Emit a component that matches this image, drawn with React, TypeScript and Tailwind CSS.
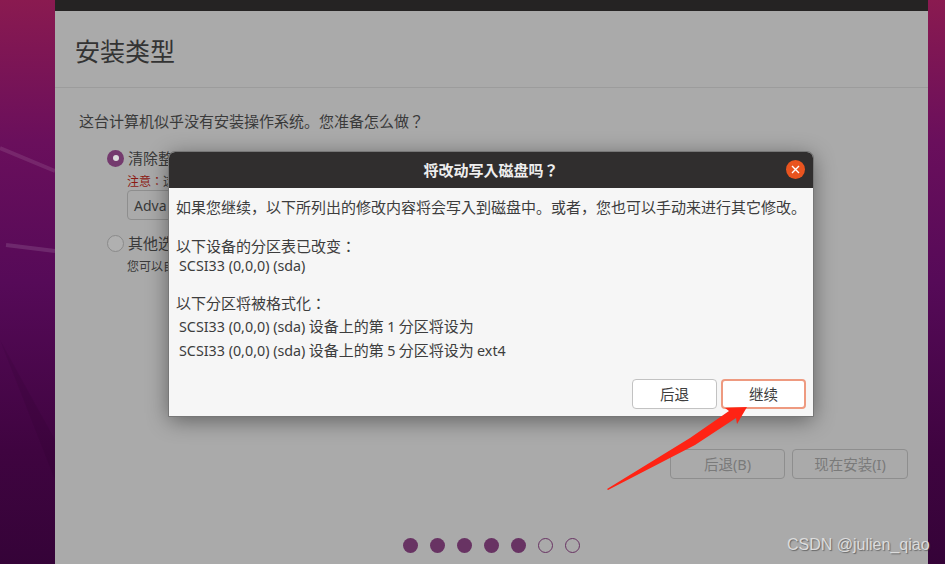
const font = "font-['Noto_Sans_CJK_JP','Noto_Sans',sans-serif]";
const latin = "font-['Noto_Sans',sans-serif] text-[14.3px]";

function Wallpaper() {
  return (
    <svg className="absolute inset-0 h-full w-full" viewBox="0 0 945 564" preserveAspectRatio="none">
      <path d="M0 148 L55 171" stroke="#ffffff" strokeOpacity="0.1" strokeWidth="4" />
      <path d="M6 245 L55 251" stroke="#ffffff" strokeOpacity="0.12" strokeWidth="4" />
      <path d="M0 340 L55 440 L55 480 Z" fill="#000000" fillOpacity="0.06" />
    </svg>
  );
}

function Arrow() {
  return (
    <svg className="pointer-events-none absolute left-0 top-0 h-[564px] w-[945px]" viewBox="0 0 945 564">
      <polygon points="607,489 690,438 729,411 725,408 747,407 737,424 736,418 695,445 608,490" fill="#ff2314" />
    </svg>
  );
}

function Dialog() {
  return (
    <div className="absolute left-[114px] top-[152px] h-[264px] w-[644px] overflow-hidden rounded-t-[6px] bg-[#f6f6f6] shadow-[0_4px_22px_rgba(0,0,0,0.45)] outline outline-1 outline-[#777777]">
      <div className="flex h-[36px] items-center justify-center bg-[#302e2e] text-[15px] font-bold text-[#eeeeee]">
        <span>将改动写入磁盘吗？</span>
        <button className="absolute right-[8px] top-[8px] flex h-[19px] w-[19px] items-center justify-center rounded-full bg-[#e9541f]">
          <svg width="9" height="9" viewBox="0 0 9 9">
            <path d="M1 1 L8 8 M8 1 L1 8" stroke="#ffffff" strokeWidth="1.4" />
          </svg>
        </button>
      </div>
      <div className="px-[7px] text-[15px] leading-[20px] text-[#3d3d3d]">
        <p className="mt-[9px] whitespace-nowrap">如果您继续，以下所列出的修改内容将会写入到磁盘中。或者，您也可以手动来进行其它修改。</p>
        <p className="mt-[19px]">以下设备的分区表已改变：</p>
        <p className={`ml-[3px] ${latin}`}>SCSI33 (0,0,0) (sda)</p>
        <p className="mt-[17px]">以下分区将被格式化：</p>
        <p className="ml-[3px] mt-[3px]"><span className={latin}>SCSI33 (0,0,0) (sda)</span> 设备上的第 <span className={latin}>1</span> 分区将设为</p>
        <p className="ml-[3px] mt-[3px]"><span className={latin}>SCSI33 (0,0,0) (sda)</span> 设备上的第 <span className={latin}>5</span> 分区将设为 <span className={latin}>ext4</span></p>
      </div>
      <div className="absolute bottom-[7px] right-[7px] flex gap-[4px] text-[14.5px] text-[#3d3d3d]">
        <button className="h-[30px] w-[85px] rounded-[4px] border border-[#c2c2c2] bg-white">后退</button>
        <button className="h-[30px] w-[85px] rounded-[4px] border-2 border-[#ee9a80] bg-white">继续</button>
      </div>
    </div>
  );
}

export default function App() {
  const dots = [true, true, true, true, true, false, false];
  return (
    <div className={`relative h-[564px] w-[945px] overflow-hidden bg-[linear-gradient(180deg,#8a1a50_0%,#6a0f5c_25%,#560a58_50%,#3f0440_80%,#350338_100%)] ${font}`}>
      <Wallpaper />
      <div className="relative ml-[55px] flex h-[564px] w-[873px] flex-col bg-[#aaaaaa] text-[#3a3a3a]">
        <div className="h-[11px] bg-[#252323]" />
        <div className="flex h-[77px] items-center border-b border-[#9c9c9c] pl-[20px] pt-[3px] text-[25px] text-[#333333]">安装类型</div>
        <p className="ml-[24px] mt-[23px] text-[15px] leading-[20px]">这台计算机似乎没有安装操作系统。您准备怎么做？</p>
        <div className="ml-[52px] mt-[17px] flex items-center gap-[4px] text-[15px] leading-[20px]">
          <span className="flex h-[17px] w-[17px] items-center justify-center rounded-full bg-[#743a6e]">
            <span className="h-[6px] w-[6px] rounded-full bg-[#dddddd]" />
          </span>
          <span>清除整</span>
        </div>
        <p className="ml-[72px] mt-[5px] text-[12px] leading-[16px]"><span className="text-[#8c1a14]">注意：</span>这</p>
        <div className="ml-[72px] mt-[1px] flex h-[30px] w-[100px] items-center rounded-[4px] border border-[#8e8e8e] pl-[6px] text-[14px]">
          <span className="font-['Noto_Sans',sans-serif]">Adva</span>
        </div>
        <div className="ml-[52px] mt-[13px] flex items-center gap-[4px] text-[15px] leading-[20px]">
          <span className="h-[17px] w-[17px] rounded-full border border-[#8a8a8a] bg-[#b0b0b0]" />
          <span>其他选</span>
        </div>
        <p className="ml-[72px] mt-[5px] text-[12px] leading-[16px]">您可以自</p>
        <div className="mr-[20px] mt-[175px] flex justify-end gap-[7px] text-[14.5px] text-[#7a7a7a]">
          <button className="h-[30px] w-[115px] rounded-[4px] border border-[#8e8e8e]">后退<span className="font-['Noto_Sans',sans-serif]">(B)</span></button>
          <button className="h-[30px] w-[116px] rounded-[4px] border border-[#8e8e8e]">现在安装<span className="font-['Noto_Sans',sans-serif]">(I)</span></button>
        </div>
        <div className="mt-[59px] flex justify-center gap-[12px] pr-[1px]">
          {dots.map((filled, i) => (
            <span
              key={i}
              className={filled ? "h-[15px] w-[15px] rounded-full bg-[#683363]" : "h-[15px] w-[15px] rounded-full border-[1.5px] border-[#683363]"}
            />
          ))}
        </div>
        <Dialog />
      </div>
      <Arrow />
      <span className="absolute left-[787px] top-[535px] font-['Liberation_Sans',sans-serif] text-[16px] leading-[20px] text-[#dcdcdc] [text-shadow:1px_1px_1px_rgba(60,60,60,0.6)]">CSDN @julien_qiao</span>
    </div>
  );
}
